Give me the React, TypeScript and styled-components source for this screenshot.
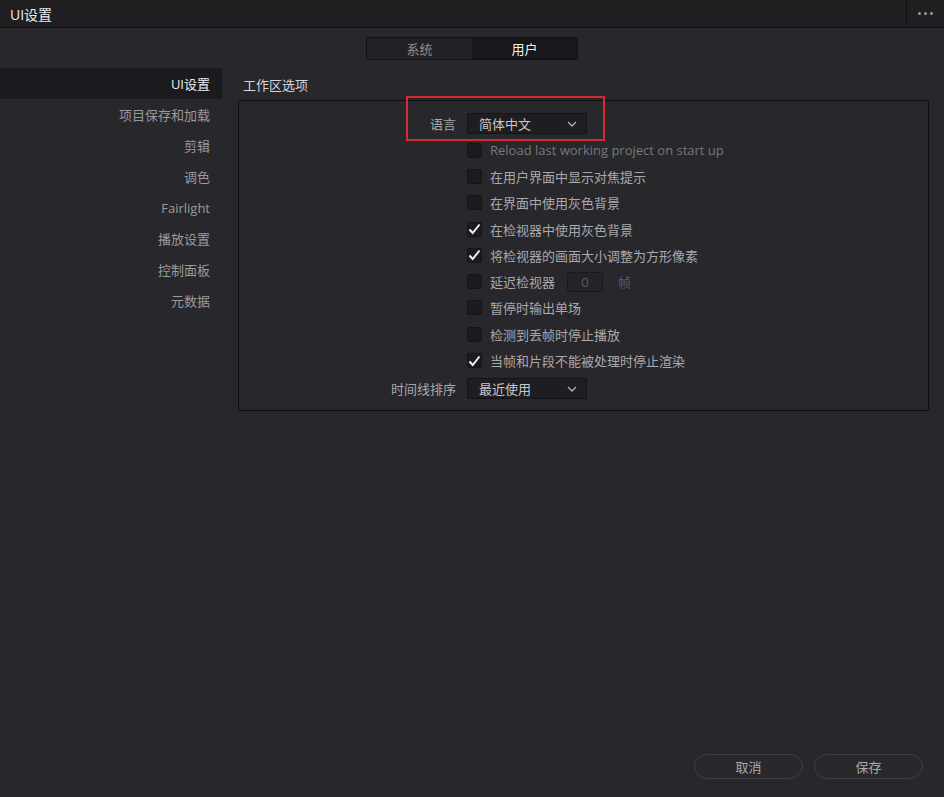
import React, { FC } from 'react';
import styled, { createGlobalStyle } from 'styled-components';

const Global = createGlobalStyle`
  html, body {
    margin: 0;
    padding: 0;
    background: #28272c;
  }
  body {
    font-family: 'Open Sans', 'Noto Sans CJK SC', sans-serif;
    font-size: 13px;
    color: #a9a9ad;
  }
`;

const Window = styled.div`
  width: 944px;
  height: 797px;
  display: flex;
  flex-direction: column;
  background: #28272c;
  overflow: hidden;
`;

const TitleBar = styled.div`
  height: 28px;
  display: flex;
  align-items: center;
  background: #1f1f22;
  border-bottom: 1px solid #0e0e10;
  box-sizing: border-box;
`;

const Title = styled.div`
  flex: 1;
  padding-left: 10px;
  color: #ececee;
  font-size: 14px;
`;

const MoreButton = styled.div`
  width: 37px;
  height: 100%;
  display: flex;
  align-items: center;
  justify-content: center;
  gap: 3px;
  border-left: 1px solid #0e0e10;

  span {
    width: 3px;
    height: 3px;
    border-radius: 50%;
    background: #9a9a9e;
  }
`;

const TabRow = styled.div`
  display: flex;
  justify-content: center;
  padding-top: 9px;
`;

const Tabs = styled.div`
  display: flex;
  border: 1px solid #111113;
  border-radius: 2px;
  overflow: hidden;
`;

const Tab = styled.div<{ $active?: boolean }>`
  width: 105px;
  height: 21px;
  display: flex;
  align-items: center;
  justify-content: center;
  background: ${p => (p.$active ? '#18181b' : '#222226')};
  color: ${p => (p.$active ? '#f0f0f2' : '#8e8e92')};
  font-size: 13px;
`;

const Body = styled.div`
  flex: 1;
  display: flex;
  padding-top: 8px;
`;

const Sidebar = styled.div`
  width: 222px;
  display: flex;
  flex-direction: column;
`;

const NavItem = styled.div<{ $active?: boolean }>`
  height: 31px;
  display: flex;
  align-items: center;
  justify-content: flex-end;
  padding-right: 12px;
  background: ${p => (p.$active ? '#1b1a1e' : 'transparent')};
  color: ${p => (p.$active ? '#ededf0' : '#9a9a9e')};
  font-size: 13px;
`;

const Content = styled.div`
  flex: 1;
  padding: 0 15px 0 16px;
  display: flex;
  flex-direction: column;
`;

const SectionTitle = styled.div`
  height: 32px;
  display: flex;
  align-items: center;
  padding-left: 5px;
  color: #d6d6d9;
  font-size: 13px;
`;

const Panel = styled.div`
  border: 1px solid #0f0f11;
  border-radius: 2px;
  padding: 9px 0 7px;
  display: flex;
  flex-direction: column;
`;

const Row = styled.div<{ $tall?: boolean }>`
  display: grid;
  grid-template-columns: 217px 1fr;
  align-items: center;
  column-gap: 11px;
  height: ${p => (p.$tall ? '28px' : '26.3px')};
  padding-top: ${p => (p.$tall ? '1px' : '0')};
`;

const RowLabel = styled.div`
  text-align: right;
  color: #a9a9ad;
`;

const Highlight = styled.div`
  display: grid;
  grid-template-columns: 217px 1fr;
  column-gap: 11px;
  align-items: center;
  position: relative;
  height: 27px;

  &::after {
    content: '';
    position: absolute;
    box-sizing: border-box;
    left: 167px;
    top: -14px;
    width: 199px;
    height: 45px;
    border: 2px solid #d42a33;
  }
`;

const Select = styled.div`
  width: 120px;
  height: 21px;
  box-sizing: border-box;
  display: flex;
  align-items: center;
  justify-content: space-between;
  padding: 0 9px 0 11px;
  background: #1e1d21;
  border: 1px solid #141416;
  border-radius: 2px;
  color: #c9c9cc;
`;

const CheckLine = styled.div<{ $disabled?: boolean }>`
  display: flex;
  align-items: center;
  gap: 8px;
  color: ${p => (p.$disabled ? '#77777b' : '#a9a9ad')};
`;

const Box = styled.div`
  width: 15px;
  height: 15px;
  box-sizing: border-box;
  background: #1c1b1f;
  border: 1px solid #151517;
  border-radius: 2px;
  display: flex;
  align-items: center;
  justify-content: center;
`;

const NumberField = styled.div`
  width: 36px;
  height: 20px;
  box-sizing: border-box;
  margin-left: 4px;
  display: flex;
  align-items: center;
  justify-content: center;
  background: #242327;
  border: 1px solid #1a1a1c;
  border-radius: 2px;
  color: #5d5d61;
`;

const Unit = styled.span`
  margin-left: 7px;
  color: #5d5d61;
`;

const Footer = styled.div`
  display: flex;
  justify-content: flex-end;
  gap: 11px;
  padding: 0 21px 18px 0;
`;

const Button = styled.div`
  width: 109px;
  height: 25px;
  box-sizing: border-box;
  display: flex;
  align-items: center;
  justify-content: center;
  border: 1px solid #3f3e44;
  border-radius: 13px;
  background: #29282d;
  color: #a9a9ad;
`;

const Chevron: FC = () => (
  <svg width="10" height="6" viewBox="0 0 10 6">
    <path d="M1 1l4 4 4-4" fill="none" stroke="#b4b4b8" strokeWidth="1.3" />
  </svg>
);

const Tick: FC = () => (
  <svg width="13" height="12" viewBox="0 0 13 12">
    <path d="M1.5 6.5l3.2 3.5L11.5 1.5" fill="none" stroke="#f4f4f6" strokeWidth="2" />
  </svg>
);

const nav = ['UI设置', '项目保存和加载', '剪辑', '调色', 'Fairlight', '播放设置', '控制面板', '元数据'];

const options: { text: string; checked?: boolean; disabled?: boolean; delay?: boolean }[] = [
  { text: 'Reload last working project on start up', disabled: true },
  { text: '在用户界面中显示对焦提示' },
  { text: '在界面中使用灰色背景' },
  { text: '在检视器中使用灰色背景', checked: true },
  { text: '将检视器的画面大小调整为方形像素', checked: true },
  { text: '延迟检视器', delay: true },
  { text: '暂停时输出单场' },
  { text: '检测到丢帧时停止播放' },
  { text: '当帧和片段不能被处理时停止渲染', checked: true },
];

const App: FC = () => {
  return (
    <Window>
      <Global />
      <TitleBar>
        <Title>UI设置</Title>
        <MoreButton>
          <span />
          <span />
          <span />
        </MoreButton>
      </TitleBar>

      <TabRow>
        <Tabs>
          <Tab>系统</Tab>
          <Tab $active>用户</Tab>
        </Tabs>
      </TabRow>

      <Body>
        <Sidebar>
          {nav.map((n, i) => (
            <NavItem key={n} $active={i === 0}>{n}</NavItem>
          ))}
        </Sidebar>

        <Content>
          <SectionTitle>工作区选项</SectionTitle>
          <Panel>
            <Highlight>
              <RowLabel>语言</RowLabel>
              <Select>
                <span>简体中文</span>
                <Chevron />
              </Select>
            </Highlight>

            {options.map(o => (
              <Row key={o.text}>
                <span />
                <CheckLine $disabled={o.disabled}>
                  <Box>{o.checked && <Tick />}</Box>
                  <span>{o.text}</span>
                  {o.delay && <>
                    <NumberField>0</NumberField>
                    <Unit>帧</Unit>
                  </>}
                </CheckLine>
              </Row>
            ))}

            <Row $tall>
              <RowLabel>时间线排序</RowLabel>
              <Select>
                <span>最近使用</span>
                <Chevron />
              </Select>
            </Row>
          </Panel>
        </Content>
      </Body>

      <Footer>
        <Button>取消</Button>
        <Button>保存</Button>
      </Footer>
    </Window>
  );
};

export default App;
